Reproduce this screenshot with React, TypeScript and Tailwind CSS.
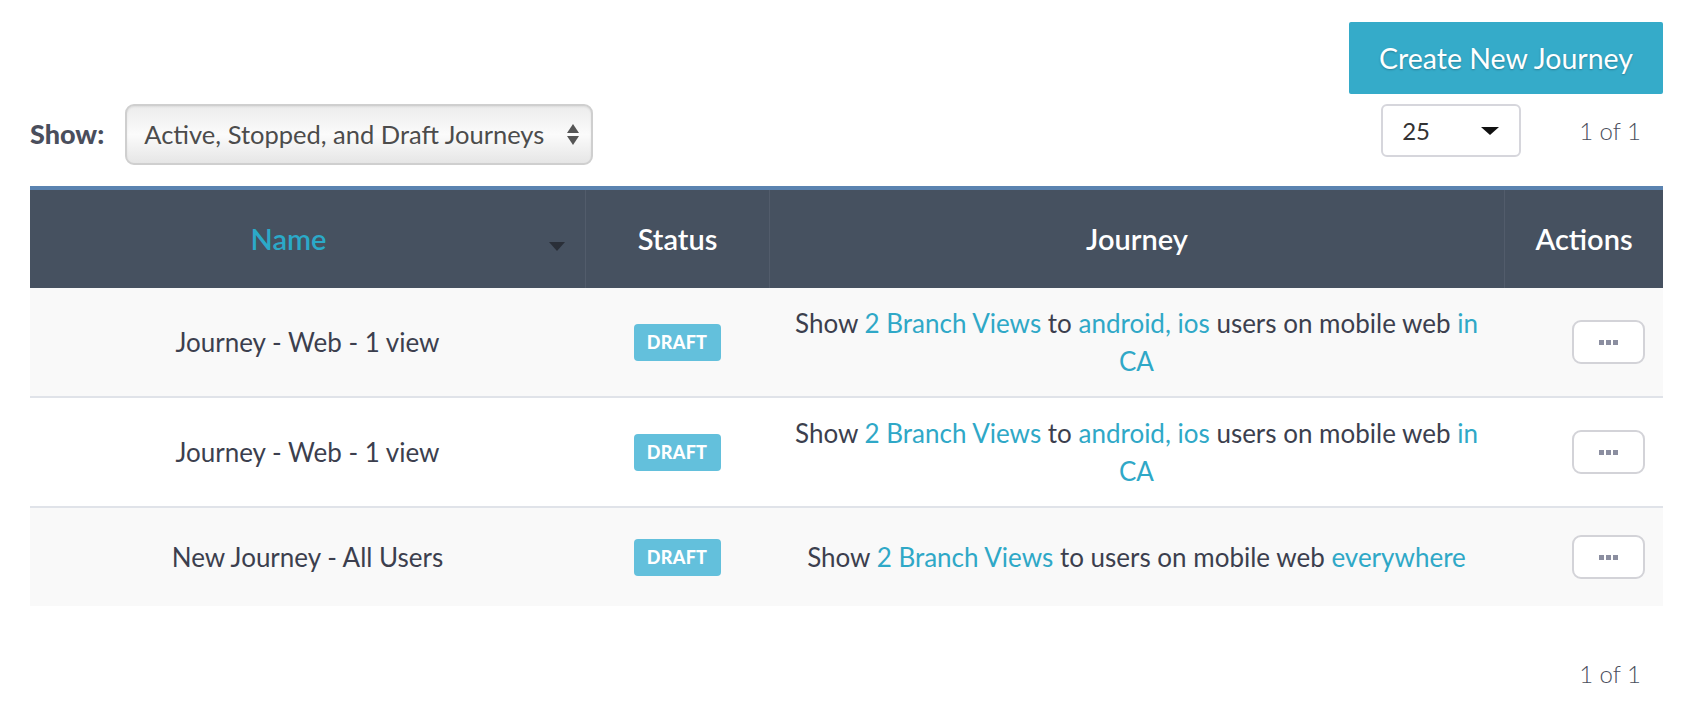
import type { ReactNode } from "react";

type Row = {
  name: string;
  journey: ReactNode;
};

const Link = ({ children }: { children: ReactNode }) => (
  <span className="text-[#2fa8c7]">{children}</span>
);

const rows: Row[] = [
  {
    name: "Journey - Web - 1 view",
    journey: (
      <>
        Show <Link>2 Branch Views</Link> to <Link>android, ios</Link> users on mobile web{" "}
        <Link>in</Link>
        <br />
        <Link>CA</Link>
      </>
    ),
  },
  {
    name: "Journey - Web - 1 view",
    journey: (
      <>
        Show <Link>2 Branch Views</Link> to <Link>android, ios</Link> users on mobile web{" "}
        <Link>in</Link>
        <br />
        <Link>CA</Link>
      </>
    ),
  },
  {
    name: "New Journey - All Users",
    journey: (
      <>
        Show <Link>2 Branch Views</Link> to users on mobile web <Link>everywhere</Link>
      </>
    ),
  },
];

const cols = "grid grid-cols-[555px_184px_735px_1fr]";

export default function App() {
  return (
    <div className="min-h-[712px] bg-white pl-[30px] pr-[25px] pt-[22px] font-['Lato',sans-serif] text-[#3c3f4e]">
      {/* toolbar */}
      <div className="flex justify-end">
        <button className="h-[72px] w-[314px] rounded-[2px] bg-[#35abc9] text-[28.5px] text-white [text-shadow:0_1px_2px_rgba(0,0,0,0.25)]">
          Create New Journey
        </button>
      </div>

      <div className="mt-[10px] flex items-start justify-between">
        <div className="flex items-center">
          <span className="text-[27px] font-black text-[#4a4e5c]">Show:</span>
          <div className="ml-[21px] flex h-[61px] w-[468px] items-center justify-between rounded-[9px] border-2 border-[#cfcfcf] bg-gradient-to-b from-[#ececec] via-[#fbfbfb] to-[#e6e6e6] pl-[17px] pr-[12px] shadow-[inset_0_1px_2px_rgba(0,0,0,0.08)]">
            <span className="text-[25.5px] text-[#4c4c4c]">Active, Stopped, and Draft Journeys</span>
            <span className="flex flex-col items-center gap-[3px]">
              <span className="h-0 w-0 border-x-[6px] border-b-[9px] border-x-transparent border-b-[#555]" />
              <span className="h-0 w-0 border-x-[6px] border-t-[9px] border-x-transparent border-t-[#555]" />
            </span>
          </div>
        </div>

        <div className="flex items-center">
          <div className="flex h-[53px] w-[140px] items-center justify-between rounded-[6px] border-2 border-[#d6d6dc] bg-white pl-[19px] pr-[20px]">
            <span className="text-[24px] text-[#333]">25</span>
            <span className="h-0 w-0 border-x-[9px] border-t-[8px] border-x-transparent border-t-[#111]" />
          </div>
          <span className="ml-[58px] mr-[22px] text-[24px] font-light text-[#4a4e5c]">1 of 1</span>
        </div>
      </div>

      {/* table */}
      <div className="mt-[21px]">
        <div className={`${cols} h-[102px] border-t-4 border-[#5b83b0] bg-[#465160] text-[29px] font-semibold text-white`}>
          <div className="relative flex items-center justify-center pr-[38px] text-[#2ba9c8]">
            Name
            <span className="absolute right-[20px] top-[52px] h-0 w-0 border-x-[8px] border-t-[9px] border-x-transparent border-t-[#2a2f38]" />
          </div>
          <div className="flex items-center justify-center border-l border-[#525c6b]">Status</div>
          <div className="flex items-center justify-center border-l border-[#525c6b]">Journey</div>
          <div className="flex items-center justify-center border-l border-[#525c6b]">Actions</div>
        </div>

        {rows.map((row, i) => (
          <div
            key={i}
            className={`${cols} min-h-[98px] text-[26px] leading-[38px] ${i % 2 === 0 ? "bg-[#f9f9f9]" : "bg-white"} ${i < rows.length - 1 ? "border-b-2 border-[#e0e3e9]" : ""}`}
          >
            <div className="flex items-center justify-center">{row.name}</div>
            <div className="flex items-center justify-center">
              <span className="flex h-[37px] w-[87px] items-center justify-center rounded-[4px] bg-[#63c0dc] text-[18px] font-black tracking-[0.3px] text-white">
                DRAFT
              </span>
            </div>
            <div className="flex items-center justify-center py-[16px] text-center">
              <p>{row.journey}</p>
            </div>
            <div className="flex items-center justify-end pr-[18px]">
              <button className="flex h-[44px] w-[73px] items-center justify-center gap-[2px] rounded-[9px] border-2 border-[#d3d3d8] bg-white">
                <span className="h-[5px] w-[5px] bg-[#8b8ea0]" />
                <span className="h-[5px] w-[5px] bg-[#8b8ea0]" />
                <span className="h-[5px] w-[5px] bg-[#8b8ea0]" />
              </button>
            </div>
          </div>
        ))}
      </div>

      <div className="mt-[50px] flex justify-end">
        <span className="mr-[22px] text-[24px] font-light text-[#4a4e5c]">1 of 1</span>
      </div>
    </div>
  );
}
